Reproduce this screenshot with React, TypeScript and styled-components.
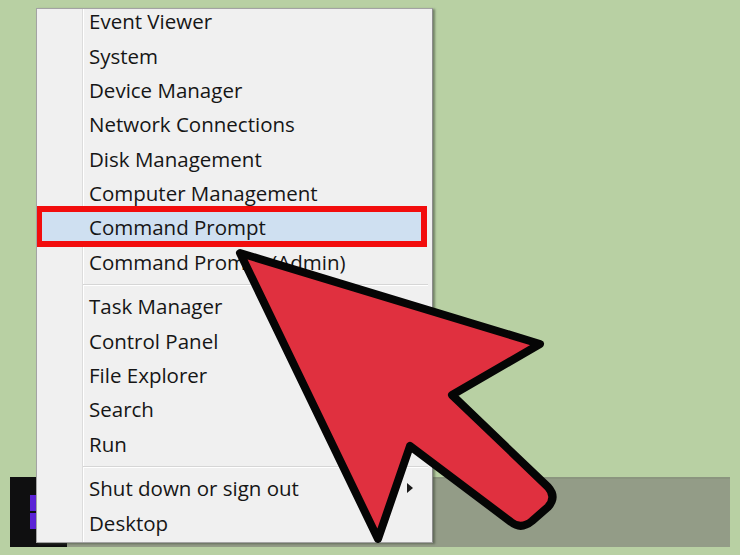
import React from "react";
import styled, { createGlobalStyle } from "styled-components";

const GlobalStyle = createGlobalStyle`
  html, body { margin: 0; padding: 0; background: #b8d0a3; }
  * { box-sizing: border-box; }
`;

const Page = styled.div`
  position: relative;
  width: 740px;
  height: 555px;
  overflow: hidden;
  background: #b8d0a3;
  display: flex;
  flex-direction: column;
  justify-content: flex-end;
  padding: 0 10px 8px 10px;
  font-family: "Open Sans", "Noto Sans", "Liberation Sans", sans-serif;
`;

const Taskbar = styled.div`
  height: 70px;
  display: flex;
`;

const StartArea = styled.div`
  width: 57px;
  background: #0f0f10;
  display: flex;
  align-items: center;
  padding-left: 20px;
`;

const LogoGrid = styled.div`
  display: grid;
  grid-template-columns: 16px 16px;
  grid-template-rows: 16px 16px;
  gap: 2px;
`;

const LogoPane = styled.div`
  background: #5b22d6;
`;

const TaskbarRest = styled.div`
  flex: 1;
  background: #939c87;
  border-top: 2px solid #8b957f;
`;

const StartMenu = styled.div`
  position: absolute;
  left: 36px;
  top: 8px;
  width: 397px;
  height: 535px;
  overflow: hidden;
  background:
    linear-gradient(
      to right,
      transparent 45px,
      #dcdcdc 45px,
      #dcdcdc 46px,
      #ffffff 46px,
      #ffffff 47px,
      transparent 47px
    ),
    #f0f0f0;
  border: 1px solid #a3a3a3;
  border-right-color: #8c8c8c;
  box-shadow: 2px 1px 2px rgba(60, 70, 55, 0.55);
`;

const MenuList = styled.div`
  display: flex;
  flex-direction: column;
  margin-top: -5px;
`;

const Item = styled.div<{ $selected?: boolean }>`
  height: ${(p) => (p.$selected ? "40.4px" : "34.4px")};
  flex-shrink: 0;
  display: flex;
  align-items: center;
  justify-content: space-between;
  padding: 0 19px 0 ${(p) => (p.$selected ? "47px" : "52px")};
  font-size: 20.5px;
  color: #161616;
  white-space: nowrap;
  ${(p) =>
    p.$selected &&
    `
    background: #cfe0f1;
    border: 6px solid #f20d0d;
    margin: -4px 5px -2px -1px;
  `}
`;

const Separator = styled.div`
  height: 10px;
  flex-shrink: 0;
  display: flex;
  align-items: center;
  padding: 0 4px 0 46px;
  &::after {
    content: "";
    flex: 1;
    height: 1px;
    background: #d6d6d6;
    box-shadow: 0 1px 0 #ffffff;
  }
`;

const SubArrow = styled.span`
  width: 0;
  height: 0;
  border-top: 5px solid transparent;
  border-bottom: 5px solid transparent;
  border-left: 6px solid #1a1a1a;
`;

const Pointer = styled.svg`
  position: absolute;
  left: 0;
  top: 0;
  width: 740px;
  height: 555px;
  pointer-events: none;
`;

const groups: string[][] = [
  [
    "Event Viewer",
    "System",
    "Device Manager",
    "Network Connections",
    "Disk Management",
    "Computer Management",
    "Command Prompt",
    "Command Prompt (Admin)",
  ],
  ["Task Manager", "Control Panel", "File Explorer", "Search", "Run"],
  ["Shut down or sign out", "Desktop"],
];

export default function App() {
  return (
    <>
      <GlobalStyle />
      <Page>
        <Taskbar>
          <StartArea>
            <LogoGrid>
              <LogoPane />
              <LogoPane />
              <LogoPane />
              <LogoPane />
            </LogoGrid>
          </StartArea>
          <TaskbarRest />
        </Taskbar>
        <StartMenu>
          <MenuList>
            {groups.map((g, gi) => (
              <React.Fragment key={gi}>
                {gi > 0 && <Separator />}
                {g.map((label) => (
                  <Item key={label} $selected={label === "Command Prompt"}>
                    <span>{label}</span>
                    {label === "Shut down or sign out" && <SubArrow />}
                  </Item>
                ))}
              </React.Fragment>
            ))}
          </MenuList>
        </StartMenu>
        <Pointer viewBox="0 0 740 555">
          <path
            d="M240 253 L540 344 L452 395 L548 487 Q557 497 548 507 L532 521 Q521 530 511 522 L410 446 L378 539 Z"
            fill="#e0303f"
            stroke="#050505"
            strokeWidth={8}
            strokeLinejoin="round"
          />
        </Pointer>
      </Page>
    </>
  );
}
